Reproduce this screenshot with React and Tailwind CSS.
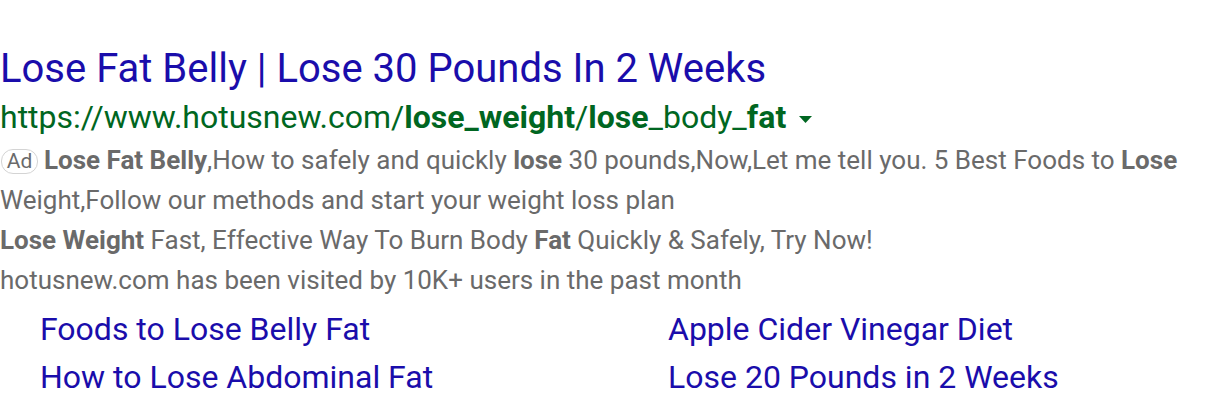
import React from 'react';

const sitelinks = [
  'Foods to Lose Belly Fat',
  'Apple Cider Vinegar Diet',
  'How to Lose Abdominal Fat',
  'Lose 20 Pounds in 2 Weeks'
];

function App() {
  return (
    <div className="bg-white w-[1216px] h-[410px] overflow-hidden font-['Roboto',sans-serif]">
      <div className="pt-[44px]">
        <h3 className="text-[40px] leading-[50px] text-[#1a0dab]">
          Lose Fat Belly | Lose 30 Pounds In 2 Weeks
        </h3>
        <div className="flex items-center text-[32px] leading-[46px] text-[#006621]">
          <span>
            https://www.hotusnew.com/<b>lose_weight</b>/<b>lose</b>_body_<b>fat</b>
          </span>
          <svg width="13" height="7" viewBox="0 0 13 7" className="ml-[13px] mt-[4px]">
            <path d="M0 0h13L6.5 7z" fill="#006621" />
          </svg>
        </div>
        <div className="text-[26px] leading-[40px] text-[#6a6a6a]">
          <p>
            <span className="inline-flex items-center justify-center w-[37px] h-[25px] ml-[1px] border border-[#d4d4d4] rounded-[12px] text-[21px] leading-none mr-[6px] align-[1px]">
              Ad
            </span>
            <b>Lose Fat Belly</b>,How to safely and quickly <b>lose</b> 30 pounds,Now,Let me tell you. 5 Best Foods to <b>Lose</b> Weight,Follow our methods and start your weight loss plan
          </p>
          <p>
            <b>Lose Weight</b> Fast, Effective Way To Burn Body <b>Fat</b> Quickly &amp; Safely, Try Now!
          </p>
          <p>hotusnew.com has been visited by 10K+ users in the past month</p>
        </div>
        <div className="mt-[5px] grid grid-cols-[628px_1fr] pl-[40px] text-[32px] leading-[48px] text-[#1a0dab]">
          {sitelinks.map(link => (
            <a key={link} className="block">{link}</a>
          ))}
        </div>
      </div>
    </div>
  );
}

export default App;
